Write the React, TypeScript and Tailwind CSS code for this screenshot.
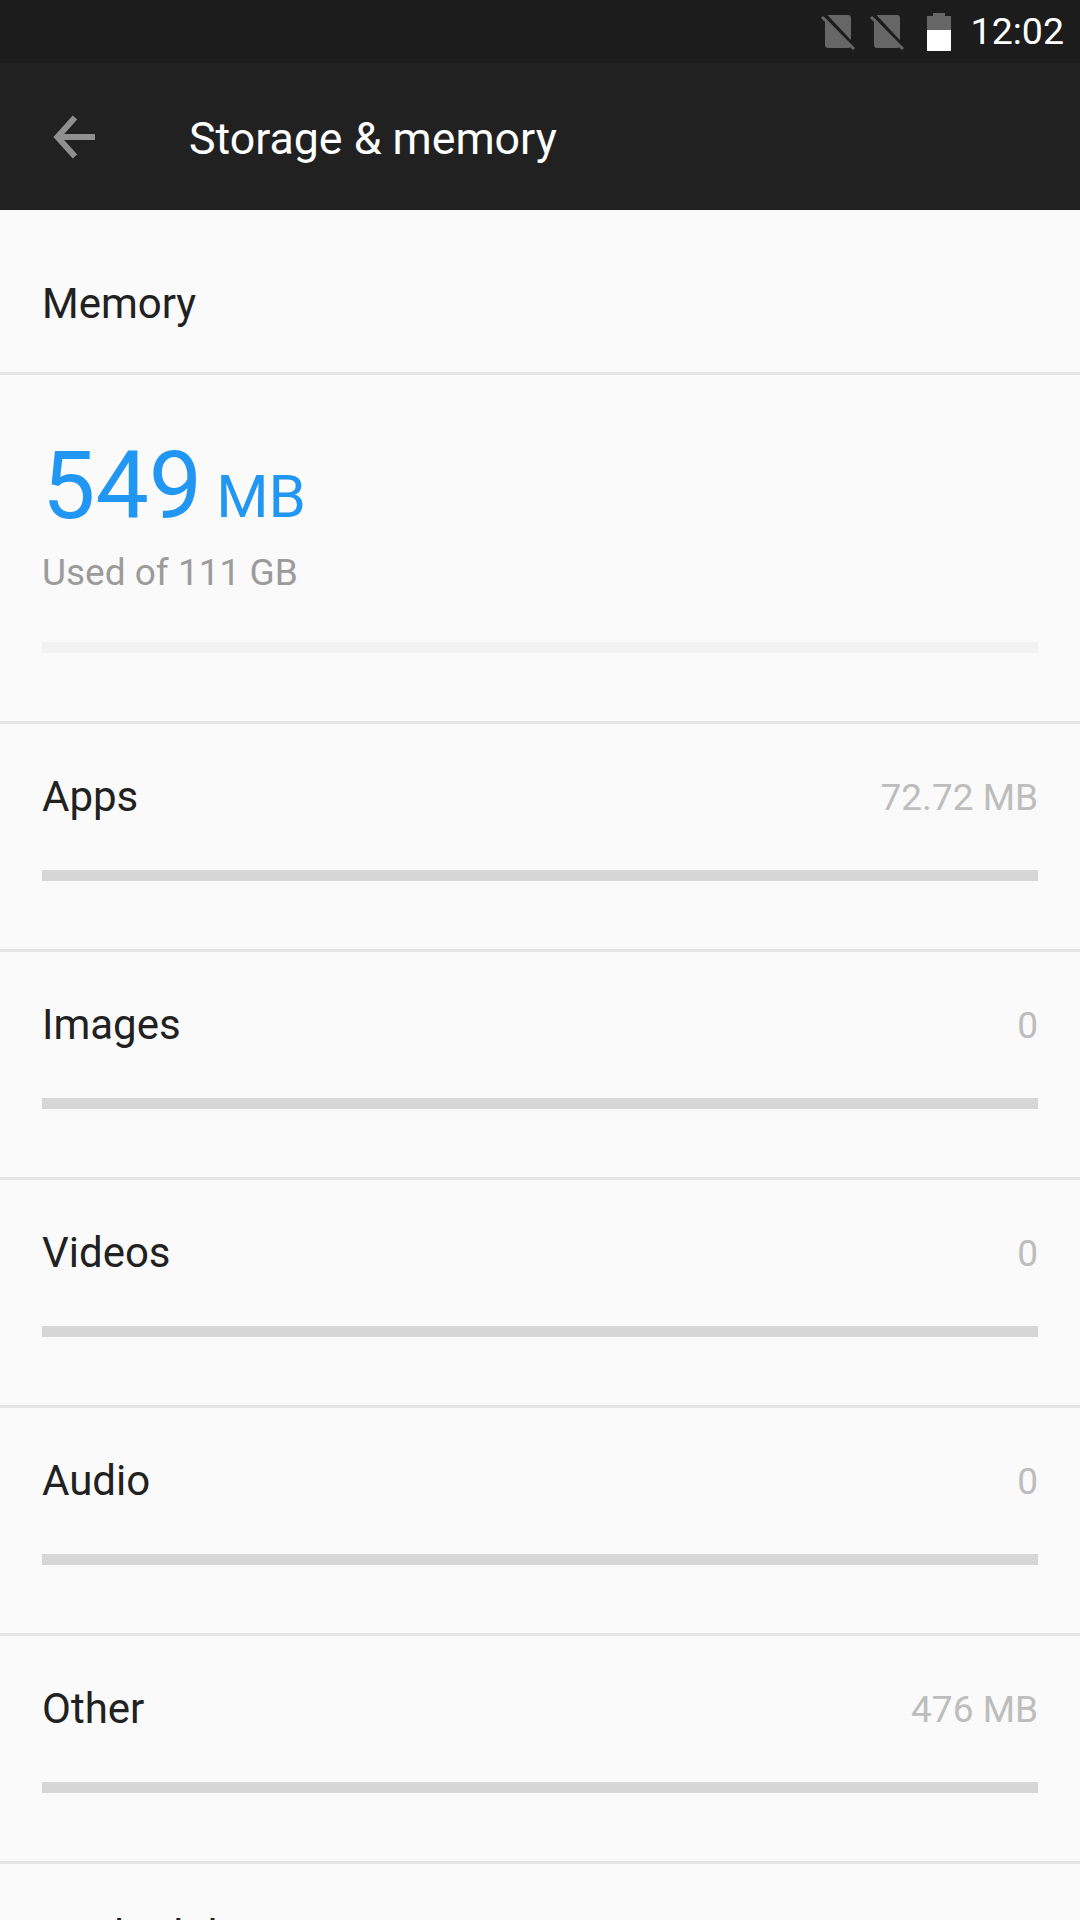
const rows = [
  { label: "Apps", value: "72.72 MB" },
  { label: "Images", value: "0" },
  { label: "Videos", value: "0" },
  { label: "Audio", value: "0" },
  { label: "Other", value: "476 MB" },
];

function NoSim() {
  return (
    <svg width="34" height="37" viewBox="0 0 34 37">
      <rect x="4" y="2" width="26" height="33" rx="3" fill="#666666" />
      <path d="M3.5 1.5L35 35" stroke="#1c1c1c" strokeWidth="3.5" />
      <path d="M1 4l32 32" stroke="#666666" strokeWidth="3" />
    </svg>
  );
}

function Battery() {
  return (
    <svg width="24" height="38" viewBox="0 0 24 38">
      <path d="M6 0h12v3h6v35H0V3h6z" fill="#666666" />
      <rect x="0" y="17" width="24" height="21" fill="#ffffff" />
    </svg>
  );
}

function BackArrow() {
  return (
    <svg width="48" height="48" viewBox="0 0 48 48" fill="none" stroke="#8f8f8f" strokeWidth="6">
      <path d="M47 24H10" />
      <path d="M27 4.5L9.4 24 27 43.5" />
    </svg>
  );
}

export default function App() {
  return (
    <div className="h-[1920px] w-[1080px] overflow-hidden bg-[#fafafa] font-['Roboto',sans-serif]">
      {/* Status bar */}
      <div className="flex h-[63px] items-center justify-end bg-[#1c1c1c] pr-[16px]">
        <div className="flex items-center gap-[15px]">
          <NoSim />
          <NoSim />
        </div>
        <div className="ml-[23px]">
          <Battery />
        </div>
        <span className="ml-[20px] text-[37.5px] leading-none text-white">12:02</span>
      </div>

      {/* Toolbar */}
      <div className="flex h-[147px] items-center bg-[#212121]">
        <div className="ml-[48px]">
          <BackArrow />
        </div>
        <h1 className="ml-[93px] pt-[6px] text-[44.7px] leading-none text-white">Storage &amp; memory</h1>
      </div>

      {/* Memory header */}
      <div className="flex h-[165px] items-center border-b-[3px] border-[#e5e5e5] pl-[42px] pt-[24px] text-[42px] text-[#212121]">
        Memory
      </div>

      {/* Total used */}
      <div className="h-[349px] border-b-[3px] border-[#e5e5e5] px-[42px] pt-[43px]">
        <div className="flex h-[115px] items-end text-[#2196f3]">
          <span className="text-[95px] leading-none">549</span>
          <span className="ml-[14px] text-[60px] leading-[1.2]">MB</span>
        </div>
        <p className="mt-[21px] text-[37px] leading-none text-[#9b9b9b]">Used of 111 GB</p>
        <div className="mt-[51px] h-[11px] bg-[#f2f2f2]" />
      </div>

      {/* Breakdown rows */}
      {rows.map((row) => (
        <div key={row.label} className="h-[228px] border-b-[3px] border-[#e5e5e5] px-[42px]">
          <div className="flex h-[146px] items-center justify-between">
            <span className="pb-[2px] text-[42px] text-[#212121]">{row.label}</span>
            <span className="pt-[2px] text-[37px] text-[#bdbdbd]">{row.value}</span>
          </div>
          <div className="h-[11px] bg-[#d6d6d6]" />
        </div>
      ))}

      <div className="px-[42px] pt-[40px] text-[42px] text-[#212121]">Cached data</div>
    </div>
  );
}
